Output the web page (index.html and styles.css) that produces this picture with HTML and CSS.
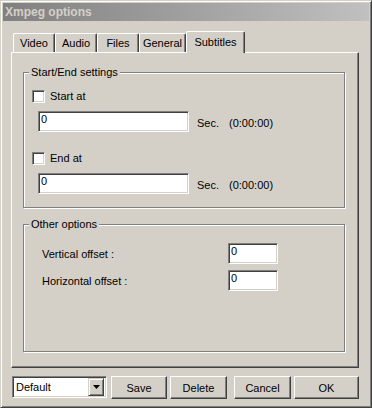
FILE: index.html
```html
<!DOCTYPE html>
<html lang="en">
<head>
  <meta charset="UTF-8" />
  <title>Xmpeg options</title>
  <link rel="stylesheet" href="styles.css">
</head>
<body>
  <div class="window">
    <div class="titlebar">Xmpeg options</div>

    <div class="tabs">
      <div class="tab tab-video">Video</div>
      <div class="tab tab-audio">Audio</div>
      <div class="tab tab-files">Files</div>
      <div class="tab tab-general">General</div>
      <div class="tab tab-subtitles active">Subtitles</div>
    </div>

    <div class="panel">
      <div class="group group-times">
        <div class="group-title">Start/End settings</div>
        <div class="check-row">
          <span class="check"></span>
          <span>Start at</span>
        </div>
        <div class="time-row">
          <div class="field field-time">0</div>
          <span class="unit">Sec.</span>
          <span class="clock">(0:00:00)</span>
        </div>
        <div class="check-row check-end">
          <span class="check"></span>
          <span>End at</span>
        </div>
        <div class="time-row">
          <div class="field field-time">0</div>
          <span class="unit">Sec.</span>
          <span class="clock">(0:00:00)</span>
        </div>
      </div>

      <div class="group group-other">
        <div class="group-title">Other options</div>
        <div class="offset-row">
          <span class="offset-label">Vertical offset :</span>
          <div class="field field-offset">0</div>
        </div>
        <div class="offset-row offset-second">
          <span class="offset-label">Horizontal offset :</span>
          <div class="field field-offset">0</div>
        </div>
      </div>
    </div>

    <div class="actions">
      <div class="combo">
        <span class="combo-text">Default</span>
        <span class="combo-btn">
          <svg width="7" height="4" viewBox="0 0 7 4"><polygon points="0,0 7,0 3.5,4" fill="#000"/></svg>
        </span>
      </div>
      <button class="btn btn-save">Save</button>
      <button class="btn btn-delete">Delete</button>
      <button class="btn btn-cancel">Cancel</button>
      <button class="btn btn-ok">OK</button>
    </div>
  </div>
</body>
</html>
```

FILE: styles.css
```css
* {
  box-sizing: border-box;
}

body {
  margin: 0;
  font-family: "Liberation Sans", Arial, sans-serif;
  font-size: 11px;
  color: #000;
  background: #d4d0c8;
}

.window {
  width: 372px;
  height: 408px;
  padding: 2px;
  background: #d4d0c8;
  border: 1px solid;
  border-color: #d4d0c8 #404040 #404040 #d4d0c8;
  box-shadow: inset 1px 1px #fff, inset -1px -1px #808080;
}

.titlebar {
  height: 18px;
  padding-left: 2px;
  line-height: 18px;
  font-size: 12px;
  font-weight: bold;
  color: #d4d0c8;
  background: linear-gradient(90deg, #808080, #c0c0c0);
}

/* tabs */
.tabs {
  display: flex;
  align-items: flex-end;
  height: 21px;
  margin: 10px 0 0 10px;
  position: relative;
  z-index: 1;
}

.tab {
  height: 19px;
  padding-top: 1px;
  line-height: 17px;
  text-align: center;
  background: #d4d0c8;
  border: 1px solid;
  border-bottom: 0;
  border-color: #fff #404040 #404040 #fff;
  border-radius: 2px 2px 0 0;
  box-shadow: inset -1px 0 #808080;
}

.tab.active {
  height: 22px;
  padding-top: 0;
  line-height: 20px;
  margin-bottom: -1px;
}

.tab-video { width: 42px; }
.tab-audio { width: 42px; }
.tab-files { width: 42px; }
.tab-general { width: 47px; }
.tab-subtitles { width: 59px; }

.panel {
  width: 348px;
  height: 316px;
  margin-left: 8px;
  padding: 19px 0 0 11px;
  border: 1px solid;
  border-color: #fff #404040 #404040 #fff;
  box-shadow: inset -1px -1px #808080;
}

/* group boxes */
.group {
  width: 322px;
  border: 1px solid #808080;
  box-shadow: inset 1px 1px #fff, 1px 1px #fff;
}

.group-times {
  height: 136px;
}

.group-other {
  height: 128px;
  margin-top: 16px;
}

.group-title {
  display: table;
  margin: -7px 0 0 5px;
  padding: 0 2px;
  line-height: 13px;
  background: #d4d0c8;
}

.check-row {
  display: flex;
  align-items: center;
  gap: 5px;
  height: 13px;
  margin: 11px 0 0 8px;
  line-height: 13px;
}

.check-row.check-end {
  margin-top: 20px;
}

.check {
  width: 13px;
  height: 13px;
  background: #fff;
  border: 1px solid;
  border-color: #808080 #fff #fff #808080;
  box-shadow: inset 1px 1px #404040, inset -1px -1px #d4d0c8;
}

.time-row {
  display: flex;
  align-items: center;
  margin: 8px 0 0 14px;
  line-height: 13px;
}

.field {
  height: 21px;
  padding: 1px 0 0 2px;
  line-height: 13px;
  background: #fff;
  border: 1px solid;
  border-color: #808080 #fff #fff #808080;
  box-shadow: inset 1px 1px #404040, inset -1px -1px #d4d0c8;
}

.field-time {
  width: 151px;
}

.unit {
  margin-left: 8px;
  padding-top: 3px;
}

.clock {
  margin-left: 10px;
  padding-top: 3px;
}

.offset-row {
  display: flex;
  align-items: center;
  margin: 12px 0 0 18px;
  line-height: 13px;
}

.offset-row.offset-second {
  margin-top: 6px;
}

.offset-label {
  width: 186px;
  padding-top: 2px;
}

.field-offset {
  width: 50px;
}

/* bottom bar */
.actions {
  display: flex;
  align-items: flex-start;
  margin: 8px 0 0 9px;
}

.combo {
  display: flex;
  align-items: center;
  width: 95px;
  height: 22px;
  padding: 2px;
  background: #fff;
  border: 1px solid;
  border-color: #808080 #fff #fff #808080;
  box-shadow: inset 1px 1px #404040, inset -1px -1px #d4d0c8;
}

.combo-text {
  flex: 1;
  padding-left: 1px;
}

.combo-btn {
  display: flex;
  align-items: center;
  justify-content: center;
  width: 16px;
  height: 18px;
  background: #d4d0c8;
  border: 1px solid;
  border-color: #d4d0c8 #404040 #404040 #d4d0c8;
  box-shadow: inset 1px 1px #fff, inset -1px -1px #808080;
}

.btn {
  height: 23px;
  padding: 0;
  font: inherit;
  color: #000;
  background: #d4d0c8;
  border: 1px solid;
  border-color: #fff #404040 #404040 #fff;
  box-shadow: inset -1px -1px #808080;
}

.btn-save { width: 56px; margin-left: 4px; }
.btn-delete { width: 57px; margin-left: 3px; }
.btn-cancel { width: 57px; margin-left: 7px; }
.btn-ok { width: 65px; margin-left: 3px; }
```
